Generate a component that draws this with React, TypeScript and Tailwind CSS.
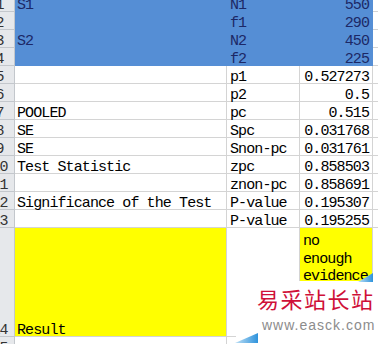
import React from "react";

type Fill = "none" | "blue" | "yellow";

type Row = {
  n: number;
  a: string;
  b: string;
  c: string;
  fillA: Fill;
  fillB: Fill;
  fillC: Fill;
  tall?: boolean;
};

const blue = (n: number, a: string, b: string, c: string): Row => ({
  n, a, b, c, fillA: "blue", fillB: "blue", fillC: "blue",
});
const plain = (n: number, a: string, b: string, c: string): Row => ({
  n, a, b, c, fillA: "none", fillB: "none", fillC: "none",
});

const rows: Row[] = [
  blue(1, "S1", "N1", "550"),
  blue(2, "", "f1", "290"),
  blue(3, "S2", "N2", "450"),
  blue(4, "", "f2", "225"),
  plain(5, "", "p1", "0.527273"),
  plain(6, "", "p2", "0.5"),
  plain(7, "POOLED", "pc", "0.515"),
  plain(8, "SE", "Spc", "0.031768"),
  plain(9, "SE", "Snon-pc", "0.031761"),
  plain(10, "Test Statistic", "zpc", "0.858503"),
  plain(11, "", "znon-pc", "0.858691"),
  plain(12, "Significance of the Test", "P-value", "0.195307"),
  plain(13, "", "P-value", "0.195255"),
];

function fillClass(f: Fill) {
  if (f === "blue") return "bg-[#558ed5] border-[#558ed5] text-[#1c2866]";
  if (f === "yellow") return "bg-[#ffff00] border-[#d4d4d4]";
  return "bg-white border-[#d4d4d4]";
}

function RowHead({ n }: { n: number }) {
  return (
    <div className="-ml-[15px] w-[30px] shrink-0 flex items-end justify-center border-r border-b border-[#c3c7cc] bg-[#e6e8eb] text-[#333] leading-[10px]">
      {n}
    </div>
  );
}

export default function App() {
  return (
    <div className="relative w-[378px] h-[344px] overflow-hidden bg-white font-[family-name:Liberation_Mono,monospace] text-[15px] tracking-[-0.9px] text-black">
      <div className="-mt-[6px] flex flex-col">
        {rows.map((r) => (
          <div key={r.n} className="flex shrink-0 h-[18px]">
            <RowHead n={r.n} />
            <div className={`w-[212px] shrink-0 flex items-end pl-[2px] border-r border-b leading-[10px] whitespace-nowrap ${fillClass(r.fillA)}`}>
              {r.a}
            </div>
            <div className={`w-[73px] shrink-0 flex items-end pl-[3px] border-r border-b leading-[10px] whitespace-nowrap ${fillClass(r.fillB)}`}>
              {r.b}
            </div>
            <div className={`w-[73px] shrink-0 flex items-end justify-end pr-[3px] border-r border-b leading-[10px] whitespace-nowrap ${fillClass(r.fillC)}`}>
              {r.c}
            </div>
            <div className="flex-1 border-b border-[#d4d4d4]" />
          </div>
        ))}

        {/* row 14: tall result row */}
        <div className="flex shrink-0 h-[109px] min-h-[109px]">
          <RowHead n={14} />
          <div className="w-[212px] shrink-0 flex items-end pl-[2px] border-r border-b border-[#d4d4d4] bg-[#ffff00] leading-[10px]">
            Result
          </div>
          <div className="w-[73px] shrink-0 border-r border-b border-[#d4d4d4]" />
          <div className="w-[73px] shrink-0 pl-[3px] pt-[5px] border-r border-b border-[#d4d4d4] bg-[#ffff00] leading-[17.5px]">
            <div>no</div>
            <div>enough</div>
            <div>evidence</div>
          </div>
          <div className="flex-1 border-b border-[#d4d4d4]" />
        </div>

        <div className="flex shrink-0 h-[18px]">
          <RowHead n={15} />
          <div className="w-[212px] shrink-0 border-r border-b border-[#d4d4d4]" />
          <div className="w-[73px] shrink-0 border-r border-b border-[#d4d4d4]" />
          <div className="w-[73px] shrink-0 border-r border-b border-[#d4d4d4]" />
          <div className="flex-1 border-b border-[#d4d4d4]" />
        </div>
      </div>

      {/* site watermark */}
      <div className="absolute left-[236px] top-[281px] w-[142px] h-[63px] bg-white">
        <div className="absolute left-[21px] top-[4px] font-[family-name:Noto_Sans_CJK_SC,serif] text-[22px] leading-[26px] tracking-[1.5px] text-[#cf1038]">
          易采站长站
        </div>
        <div className="absolute left-[26px] top-[36px] font-[family-name:Liberation_Sans,sans-serif] text-[14px] leading-[16px] tracking-[1px] text-[#8c8c8c]">
          www.easck.com
        </div>
      </div>
      <svg className="absolute left-[358px] top-[273px]" width="15" height="9" viewBox="0 0 15 9">
        <defs>
          <linearGradient id="wm1" x1="0" y1="0" x2="1" y2="0">
            <stop offset="0" stopColor="#bfe0f5" />
            <stop offset="1" stopColor="#2f93dc" />
          </linearGradient>
        </defs>
        <polygon points="0,9 15,9 15,0" fill="url(#wm1)" />
      </svg>
      <svg className="absolute left-[235px] top-[333px]" width="23" height="10" viewBox="0 0 23 10">
        <defs>
          <linearGradient id="wm2" x1="0" y1="0" x2="1" y2="0">
            <stop offset="0" stopColor="#bfe0f5" />
            <stop offset="1" stopColor="#2f93dc" />
          </linearGradient>
        </defs>
        <polygon points="0,10 23,10 23,0" fill="url(#wm2)" />
      </svg>
    </div>
  );
}
